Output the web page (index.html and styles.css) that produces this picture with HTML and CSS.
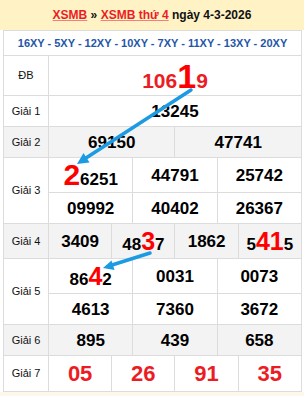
FILE: index.html
```html
<!DOCTYPE html>
<html lang="vi">
<head>
<meta charset="utf-8">
<title>XSMB thứ 4</title>
<link rel="stylesheet" href="styles.css">
</head>
<body>
<div class="page">
  <div class="head"><a class="lnk" href="#">XSMB</a> » <a class="lnk" href="#">XSMB thứ 4</a> ngày 4-3-2026</div>
  <div class="frame">
    <div class="xy">16XY - 5XY - 12XY - 10XY - 7XY - 11XY - 13XY - 20XY</div>
    <table class="kq">
      <colgroup>
        <col class="c-lbl">
        <col><col><col><col><col><col><col><col><col><col><col><col>
      </colgroup>
      <tr class="r-db">
        <td class="lbl">ĐB</td>
        <td colspan="12" class="db">106<span class="hl-db">1</span>9</td>
      </tr>
      <tr class="r-n">
        <td class="lbl">Giải 1</td>
        <td colspan="12" class="num">13245</td>
      </tr>
      <tr class="r-n gray">
        <td class="lbl">Giải 2</td>
        <td colspan="6" class="num">69150</td>
        <td colspan="6" class="num">47741</td>
      </tr>
      <tr class="r-big">
        <td class="lbl" rowspan="2">Giải 3</td>
        <td colspan="4" class="num"><span class="hl-3">2</span>6251</td>
        <td colspan="4" class="num">44791</td>
        <td colspan="4" class="num">25742</td>
      </tr>
      <tr class="r-n">
        <td colspan="4" class="num">09992</td>
        <td colspan="4" class="num">40402</td>
        <td colspan="4" class="num">26367</td>
      </tr>
      <tr class="r-big gray">
        <td class="lbl">Giải 4</td>
        <td colspan="3" class="num">3409</td>
        <td colspan="3" class="num">48<span class="hl">3</span>7</td>
        <td colspan="3" class="num">1862</td>
        <td colspan="3" class="num">5<span class="hl">41</span>5</td>
      </tr>
      <tr class="r-big">
        <td class="lbl" rowspan="2">Giải 5</td>
        <td colspan="4" class="num">86<span class="hl">4</span>2</td>
        <td colspan="4" class="num">0031</td>
        <td colspan="4" class="num">0073</td>
      </tr>
      <tr class="r-n">
        <td colspan="4" class="num">4613</td>
        <td colspan="4" class="num">7360</td>
        <td colspan="4" class="num">3672</td>
      </tr>
      <tr class="r-n gray">
        <td class="lbl">Giải 6</td>
        <td colspan="4" class="num">895</td>
        <td colspan="4" class="num">439</td>
        <td colspan="4" class="num">658</td>
      </tr>
      <tr class="r-g7">
        <td class="lbl">Giải 7</td>
        <td colspan="3" class="g7">05</td>
        <td colspan="3" class="g7">26</td>
        <td colspan="3" class="g7">91</td>
        <td colspan="3" class="g7">35</td>
      </tr>
    </table>
  </div>
  <div class="foot"></div>
  <svg class="arrows" width="304" height="396" viewBox="0 0 304 396" aria-hidden="true">
    <line x1="191" y1="90" x2="86" y2="158" stroke="#1d9be2" stroke-width="3.5" stroke-linecap="round"/>
    <polygon points="77,164 89.5,162.5 83.5,153" fill="#1d9be2"/>
    <line x1="150" y1="253" x2="112" y2="265" stroke="#1d9be2" stroke-width="3.5" stroke-linecap="round"/>
    <polygon points="103,268 114.5,270 111.5,260.5" fill="#1d9be2"/>
  </svg>
</div>
</body>
</html>
```
FILE: styles.css
```css
html, body {
  margin: 0;
  padding: 0;
  background: #ffffff;
}
body {
  font-family: "Liberation Sans", Arial, sans-serif;
  color: #000;
}
.page {
  position: relative;
  width: 304px;
  height: 396px;
  overflow: hidden;
}
.head {
  height: 30px;
  line-height: 30px;
  background: #fff3c6;
  text-align: center;
  font-size: 12px;
  font-weight: bold;
  color: #111;
}
.lnk {
  color: #ec1c24;
  text-decoration: underline;
  text-decoration-color: #f08080;
}
.frame {
  margin: 0 2px 0 3px;
}
.xy {
  height: 24px;
  line-height: 25px;
  border: 1px solid #dcdcdc;
  border-bottom: none;
  text-align: center;
  font-size: 11px;
  font-weight: bold;
  color: #2456a8;
  white-space: nowrap;
}
.kq {
  width: 100%;
  border-collapse: collapse;
  table-layout: fixed;
}
.c-lbl {
  width: 45px;
}
.kq td {
  border: 1px solid #dcdcdc;
  padding: 0;
  text-align: center;
  vertical-align: middle;
  line-height: 1;
}
.r-db { height: 40px; }
.r-n { height: 31px; }
.r-big { height: 35px; }
.r-g7 { height: 36px; }
.gray td { background: #f3f3f3; }
.lbl {
  font-size: 11px;
  color: #111;
}
.num {
  font-size: 17px;
  font-weight: bold;
}
.db {
  font-size: 21px;
  font-weight: bold;
  color: #ec1c24;
}
.hl-db {
  font-size: 34px;
  color: #f00;
}
.hl-3 {
  font-size: 30px;
  color: #f00;
}
.hl {
  font-size: 25px;
  color: #f00;
}
.g7 {
  font-size: 22px;
  font-weight: bold;
  color: #ec1c24;
}
.foot {
  height: 4px;
  background: #fcf8ea;
}
.arrows {
  position: absolute;
  left: 0;
  top: 0;
  pointer-events: none;
}
```
